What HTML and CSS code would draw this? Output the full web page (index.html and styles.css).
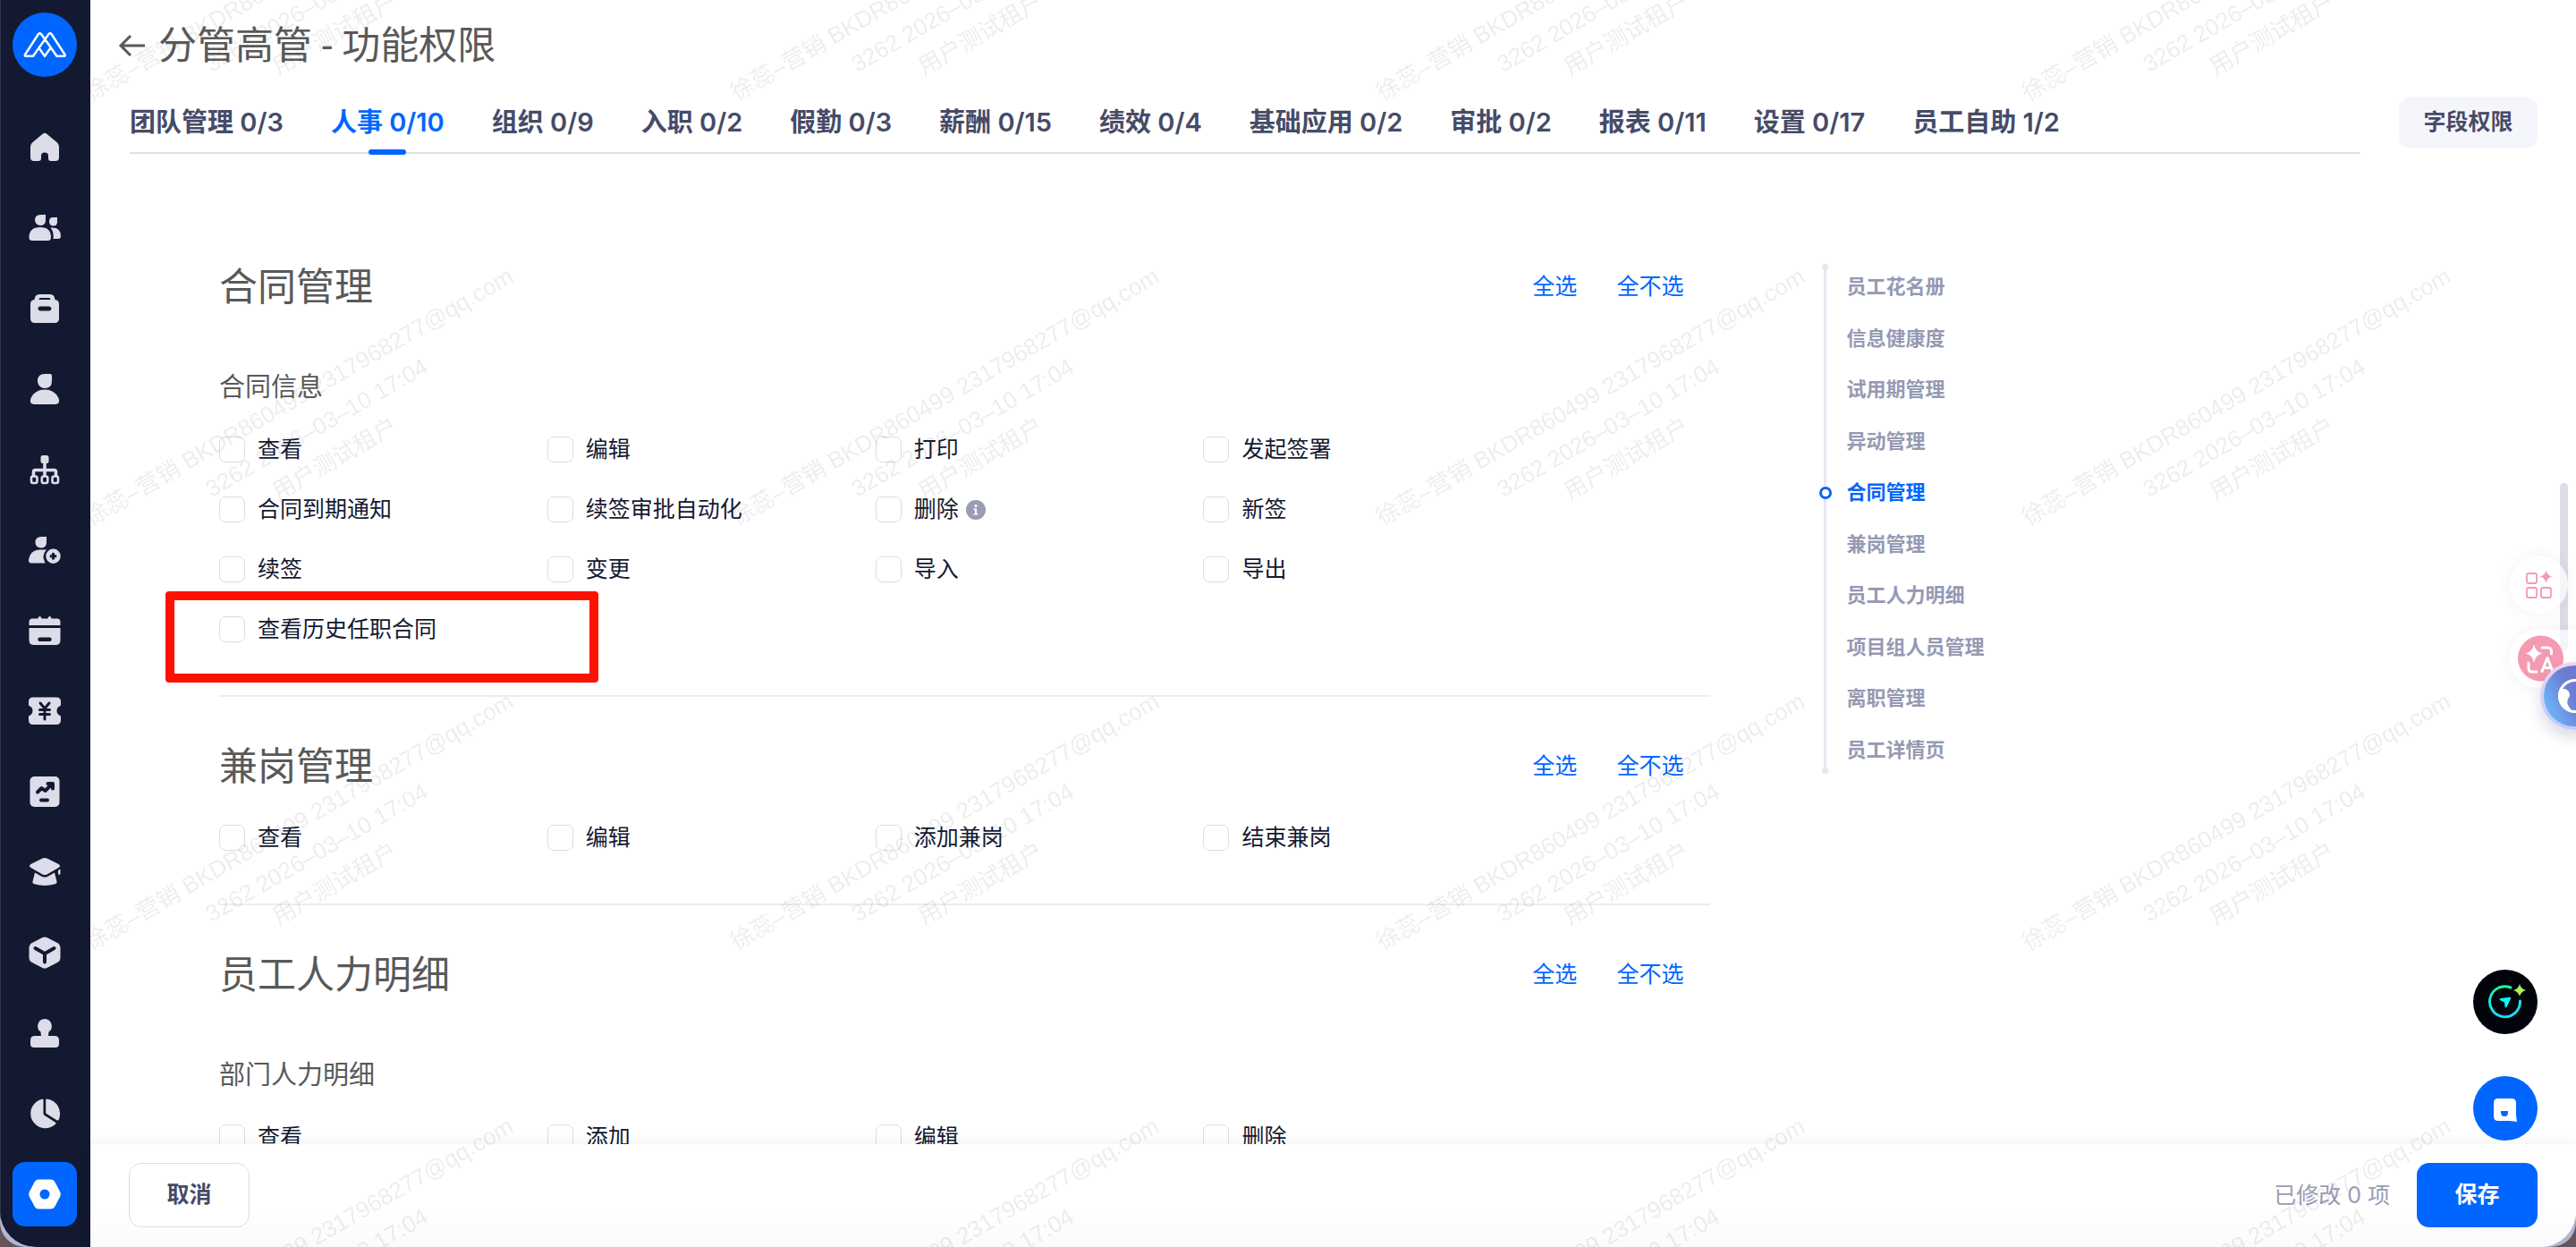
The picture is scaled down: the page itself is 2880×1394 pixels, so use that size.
FILE: index.html
```html
<!DOCTYPE html>
<html lang="zh-CN">
<head>
<meta charset="utf-8">
<title>分管高管 - 功能权限</title>
<link rel="stylesheet" href="styles.css">
</head>
<body>
<div class="window">
<div class="app">
  <aside class="sidebar">
    <a class="logo" href="#" aria-label="首页">
      <svg viewBox="0 0 72 72" width="72" height="72" fill="none" stroke="#fff" stroke-width="2.400" stroke-linejoin="round" stroke-linecap="round"><path d="M36 29.500l-4-5.500q-1.500-1.500-3 0L14 47q-.8 1.700 1 1.700h8L40.500 24q1.500-1.500 3 0l15 23q.8 1.700-1 1.700h-8L36 29.500M29.500 39.500l6.500 9.200 6.500-9.200"/></svg>
    </a>
    <nav class="menu">
      <a href="#" aria-label="工作台"><svg viewBox="0 0 36 36"><path d="M16 2.600q2-1.600 4 0l11.500 9.400q2.500 2 2.500 5V29q0 4-4 4h-5q-3 0-3-3v-3q0-3.500-4-3.500T14 27v3q0 3-3 3H6q-4 0-4-4V17q0-3 2.500-5z"/></svg></a>
      <a href="#" aria-label="团队"><svg viewBox="0 0 36 36"><path d="M13.500 3H19v6q0 6-6 6a6 6 0 0 1-6-6q0-6 6.500-6zM13 17q12 0 12 11.500 0 3.500-3.500 3.500H4Q.500 32 .500 28.500.500 17 13 17zM27 6h5v5q0 4.500-4.500 4.500A4.500 4.500 0 0 1 23 11q0-5 4-5zM24.500 17.500Q36 16.500 36 27q0 3-3 3h-5.500q1-7.500-3-12.500z"/></svg></a>
      <a href="#" aria-label="档案"><svg viewBox="0 0 36 36"><path fill-rule="evenodd" d="M12 2h12q5 0 5.500 6Q34 8.500 34 13v16q0 5-5 5H7q-5 0-5-5V13q0-4.500 4.500-5Q7 2 12 2zM13 6q-1.500 0-1.500 2h13Q24.500 6 23 6zM13 15.500a2.500 2.500 0 0 0 0 5h10a2.500 2.500 0 0 0 0-5z"/></svg></a>
      <a href="#" aria-label="员工"><svg viewBox="0 0 36 36"><path d="M18 1h6q2 0 2 2v6q0 8-8 8a8 8 0 0 1-8-8q0-8 8-8zM18 18.500q11 0 15.500 9.500 2.500 7-4 7h-23q-6.500 0-4-7Q7 18.500 18 18.500z"/></svg></a>
      <a href="#" aria-label="组织"><svg viewBox="0 0 36 36"><rect x="13.500" y="2" width="9" height="9" rx="2.500"/><path d="M18 9v16M5.500 25v-4.500q0-2 2-2h21q2 0 2 2V25" fill="none" stroke="#dcdde8" stroke-width="3.600"/><g fill="none" stroke="#dcdde8" stroke-width="2.600"><rect x="3" y="25.500" width="6.500" height="7.500" rx="2"/><rect x="14.800" y="25.500" width="6.500" height="7.500" rx="2"/><rect x="26.500" y="25.500" width="6.500" height="7.500" rx="2"/></g></svg></a>
      <a href="#" aria-label="入职"><svg viewBox="0 0 36 36"><path d="M14 3h6v6.500q0 6-6.500 6A6 6 0 0 1 7.500 9.500Q7.500 3 14 3zM13 17.500h7q-6 6.500-1.500 15H3q-3 0-3-3Q1.500 17.500 13 17.500z"/><path fill-rule="evenodd" d="M27.500 16.500a8.200 8.200 0 1 1 0 16.400 8.200 8.200 0 0 1 0-16.400zM26 21v2.200h-2.200v3H26v2.200h3v-2.200h2.200v-3H29V21z"/></svg></a>
      <a href="#" aria-label="假勤"><svg viewBox="0 0 36 36"><path d="M.500 12V8.500q0-4 4-4H10.500q0-2.500 2-2.500t2 2.500h7q0-2.500 2-2.500t2 2.500h6q4 0 4 4V12z"/><path fill-rule="evenodd" d="M.500 15h35v13.500q0 5.500-5.500 5.500H6q-5.500 0-5.500-5.500zM12.500 25.500a2.200 2.200 0 0 0 0 4.400h11a2.200 2.200 0 0 0 0-4.400z"/></svg></a>
      <a href="#" aria-label="薪酬"><svg viewBox="0 0 36 36"><path d="M5 2.500h26q5 0 5 5v4q-4.500 2-4.500 6t4.500 6v4.500q0 5-5 5H5q-5 0-5-5v-4.500q4.500-2 4.500-6T0 11.500v-4q0-5 5-5z"/><path d="M13 9l5 6 5-6M12.500 16.500h11M12.500 21.500h11M18 15v12" class="cut thin"/></svg></a>
      <a href="#" aria-label="绩效"><svg viewBox="0 0 36 36"><rect x="1.500" y="1" width="33" height="34" rx="5"/><path d="M10 18.500l4.500-4.500 4 3 7-7M21.500 9H27v5.500M14 27.500h7" class="cut"/></svg></a>
      <a href="#" aria-label="培训"><svg viewBox="0 0 36 36"><path d="M15.500 2.500q2.500-1.200 5 0l13 6.500q3 2 0 4L20.500 20.500q-2.500 1.200-5 0L2.500 13q-3-2 0-4zM7 18.500l7.500 4.200q3.500 1.800 7 0L29 18.500l2.500 10q.5 2-2 2.800-11.500 3.400-23 0-2.500-.8-2-2.800zM33 16l2.500-1.500v5q-1 3-2.500 0z"/></svg></a>
      <a href="#" aria-label="应用"><svg viewBox="0 0 36 36"><path d="M15.500 1q2.500-1.200 5 0l12 6.300Q35.500 9 35.500 12v12q0 3-3 4.700L20.500 35q-2.500 1.200-5 0l-12-6.300Q.500 27 .500 24V12q0-3 3-4.700z"/><path d="M7.500 13l10.500 6 10.500-6M18 19v9.500" class="cut"/></svg></a>
      <a href="#" aria-label="审批"><svg viewBox="0 0 36 36"><path d="M18 2a8 8 0 0 1 4.500 14.500L22 21h7q5 0 5 5v4q0 4-4 4H6q-4 0-4-4v-4q0-5 5-5h7l-.5-4.500A8 8 0 0 1 18 2z"/></svg></a>
      <a href="#" aria-label="报表"><svg viewBox="0 0 36 36"><path d="M15.500 1.500q1 0 1 1.500v15q0 1 1 1.700l12.500 8q1 1 0 2A16.500 16.500 0 1 1 15.500 1.500zM20 1.500A16.500 16.500 0 0 1 33.500 25q-.8 1-2 .3L20 18q-.8-.5-.8-1.500V2.500q0-1 .8-1z"/></svg></a>
      <a href="#" aria-label="设置" class="active"><svg viewBox="0 0 36 36"><path fill="#fff" fill-rule="evenodd" d="M11.500 1.500h13q3.500 0 5 3l5.500 10.500q1.500 3 0 6L29.500 31.500q-1.500 3-5 3h-13q-3.500 0-5-3L1 21q-1.500-3 0-6L6.500 4.500q1.500-3 5-3zM18 12.500a5.500 5.500 0 1 0 0 11 5.500 5.500 0 0 0 0-11z"/></svg></a>
    </nav>
  </aside>

  <main class="main">
    <header class="header">
      <a class="back" href="#" aria-label="返回"><svg viewBox="0 0 32 32" width="32" height="32" fill="none" stroke="#595959" stroke-width="3"><path d="M15 5L4 16l11 11M3.500 16H31"/></svg></a>
      <h1>分管高管 - 功能权限</h1>
    </header>

    <div class="tabbar">
      <nav class="tabs">
        <a href="#">团队管理 0/3</a>
        <a href="#" class="current">人事 0/10</a>
        <a href="#">组织 0/9</a>
        <a href="#">入职 0/2</a>
        <a href="#">假勤 0/3</a>
        <a href="#">薪酬 0/15</a>
        <a href="#">绩效 0/4</a>
        <a href="#">基础应用 0/2</a>
        <a href="#">审批 0/2</a>
        <a href="#">报表 0/11</a>
        <a href="#">设置 0/17</a>
        <a href="#">员工自助 1/2</a>
      </nav>
      <button type="button" class="field-btn">字段权限</button>
    </div>

    <div class="content">
      <div class="sections">
        <section>
          <div class="section-head"><h2>合同管理</h2><a href="#">全选</a><a href="#">全不选</a></div>
          <h3>合同信息</h3>
          <div class="options">
            <label><input type="checkbox">查看</label>
            <label><input type="checkbox">编辑</label>
            <label><input type="checkbox">打印</label>
            <label><input type="checkbox">发起签署</label>
            <label><input type="checkbox">合同到期通知</label>
            <label><input type="checkbox">续签审批自动化</label>
            <label><input type="checkbox">删除<svg class="info" viewBox="0 0 22 22" width="22" height="22"><circle cx="11" cy="11" r="11" fill="#999cb5"/><circle cx="11" cy="6.500" r="1.600" fill="#fff"/><path d="M8.500 9.500H12V15h1.500v1.500h-5V15H10v-4H8.500z" fill="#fff"/></svg></label>
            <label><input type="checkbox">新签</label>
            <label><input type="checkbox">续签</label>
            <label><input type="checkbox">变更</label>
            <label><input type="checkbox">导入</label>
            <label><input type="checkbox">导出</label>
            <label class="marked"><input type="checkbox">查看历史任职合同</label>
          </div>
        </section>
        <section>
          <div class="section-head"><h2>兼岗管理</h2><a href="#">全选</a><a href="#">全不选</a></div>
          <div class="options">
            <label><input type="checkbox">查看</label>
            <label><input type="checkbox">编辑</label>
            <label><input type="checkbox">添加兼岗</label>
            <label><input type="checkbox">结束兼岗</label>
          </div>
        </section>
        <section>
          <div class="section-head"><h2>员工人力明细</h2><a href="#">全选</a><a href="#">全不选</a></div>
          <h3>部门人力明细</h3>
          <div class="options">
            <label><input type="checkbox">查看</label>
            <label><input type="checkbox">添加</label>
            <label><input type="checkbox">编辑</label>
            <label><input type="checkbox">删除</label>
          </div>
        </section>
      </div>
      <nav class="anchors">
        <a href="#">员工花名册</a>
        <a href="#">信息健康度</a>
        <a href="#">试用期管理</a>
        <a href="#">异动管理</a>
        <a href="#" class="current">合同管理</a>
        <a href="#">兼岗管理</a>
        <a href="#">员工人力明细</a>
        <a href="#">项目组人员管理</a>
        <a href="#">离职管理</a>
        <a href="#">员工详情页</a>
      </nav>
    </div>

    <footer class="footer">
      <button type="button" class="cancel">取消</button>
      <span class="changed">已修改 0 项</span>
      <button type="button" class="save">保存</button>
    </footer>
  </main>
</div>

<div class="scroll-thumb"></div>

<div class="plugins">
  <button type="button" class="plugin" aria-label="组件">
    <svg viewBox="0 0 65 65" width="65" height="65" fill="none" stroke="#f49ab1" stroke-width="1.800"><rect x="19" y="20" width="11" height="11" rx="2"/><rect x="19" y="36" width="11" height="11" rx="2"/><rect x="35" y="36" width="11" height="11" rx="2"/><path stroke="none" fill="#f49ab1" d="M40.500 16.500q1 6 7 7-6 1-7 7.500-1-6.500-7-7.500 6-1 7-7z"/></svg>
  </button>
  <button type="button" class="plugin translate" aria-label="翻译">
    <svg viewBox="0 0 65 65" width="65" height="65" fill="none" stroke="#fff" stroke-width="3" stroke-linecap="round" stroke-linejoin="round"><circle cx="34.500" cy="32" r="25.500" fill="#f49ab1" stroke="none"/><path d="M36 20h6q4.500 0 4.500 4.500V27M21 37v6q0 4 4 4h5M36 46.500l6-15 6 15M38 42.500h8"/><path stroke="none" fill="#fff" d="M27 16q1.500 9 9.500 10.500Q28.500 28 27 37q-1.500-9-9.500-10.500Q25.500 25 27 16z"/></svg>
  </button>
</div>
<button type="button" class="orb" aria-label="助手">
  <svg viewBox="0 0 76 76" width="76" height="76"><defs><linearGradient id="orbFill" x1="0" y1=".7" x2="1" y2=".2"><stop offset="0" stop-color="#6bb8fa"/><stop offset=".45" stop-color="#6c7fd4"/><stop offset="1" stop-color="#6a6bc0"/></linearGradient><linearGradient id="orbRim" x1="0" y1="0" x2="0" y2="1"><stop offset="0" stop-color="#f0d2ec"/><stop offset=".5" stop-color="#dccdfb"/><stop offset="1" stop-color="#b9ccff"/></linearGradient></defs><circle cx="38" cy="38" r="38" fill="url(#orbRim)"/><circle cx="38" cy="38" r="34" fill="url(#orbFill)"/><circle cx="39" cy="38" r="17.500" fill="none" stroke="#fff" stroke-width="3"/><path fill="#fff" d="M20 38q0-8 7-8a7 7 0 0 1 6 8q-4 5-2 10 2 5 8 9-18-3-19-19z"/></svg>
</button>

<div class="assist">
  <button type="button" class="ai" aria-label="智能助手">
    <svg viewBox="0 0 72 72" width="72" height="72"><defs><linearGradient id="ring" x1="0" y1="0" x2="0" y2="1"><stop offset="0" stop-color="#19f5a0"/><stop offset="1" stop-color="#1ad8ff"/></linearGradient></defs><path d="M42 20a17 17 0 1 0 10.500 15" fill="none" stroke="url(#ring)" stroke-width="3" stroke-linecap="round"/><path d="M31 32l10-1.300q1.500 0 1 1.500L37.500 42q-1.500 1-2-1l-.5-4.500-5-2.500q-1.500-1.500 1-2z" fill="#0ff"/><path d="M52 16q1.500 5.500 7 7-5.500 1.500-7 7-1.500-5.500-7-7 5.500-1.500 7-7z" fill="#aaf25a"/></svg>
  </button>
  <button type="button" class="chat" aria-label="客服">
    <svg viewBox="0 0 72 72" width="72" height="72"><path fill="#fff" fill-rule="evenodd" d="M28 25h15q5 0 5 5v14l1 7-8-1H28q-5 0-5-5V30q0-5 5-5zM31 39v1.500q0 4.500 4 4.500t4-4.500V39z"/></svg>
  </button>
</div>

<svg class="watermark" aria-hidden="true">
  <defs>
    <pattern id="mark" x="-9" y="-236" width="722" height="475" patternUnits="userSpaceOnUse">
      <g transform="translate(363 239) rotate(-30)" text-anchor="middle">
        <text y="-31">徐蕊–营销 BKDR860499 2317968277@qq.com</text>
        <text y="9">3262 2026–03–10 17:04</text>
        <text y="49">用户测试租户</text>
      </g>
    </pattern>
  </defs>
  <rect width="100%" height="100%" fill="url(#mark)"/>
</svg>
</div>
</body>
</html>
```
FILE: styles.css
```css
*,
*::before,
*::after {
  box-sizing: border-box;
}

body {
  margin: 0;
  background: #65545c;
  font-family: Roboto, "Noto Sans CJK SC", sans-serif;
  font-size: 25px;
  line-height: 36px;
  color: #141932;
}

a {
  color: inherit;
  text-decoration: none;
}

button {
  border: 0;
  padding: 0;
  font: inherit;
  cursor: pointer;
}

h1, h2, h3 {
  margin: 0;
  font-weight: 400;
  color: #595959;
}

.window {
  position: relative;
  height: 100vh;
  overflow: hidden;
  border-radius: 0 0 28px 28px;
  background: #b3b6d0;
}

.app {
  display: flex;
  height: 100%;
  overflow: hidden;
  border-radius: 0 0 40px 40px;
  background: #fff;
}

/* Sidebar */
.sidebar {
  flex: 0 0 101px;
  display: flex;
  flex-direction: column;
  align-items: center;
  padding: 14px 1px 0 0;
  background: #141932;
  box-shadow: inset 1px 0 #2f3553;
}

.logo {
  height: 72px;
  border-radius: 50%;
  background: #0066ff;
}

.menu {
  display: flex;
  flex-direction: column;
  gap: 18px;
  padding-top: 43px;
}

.menu a {
  display: grid;
  place-items: center;
  width: 72px;
  height: 72px;
  border-radius: 14px;
}

.menu .active {
  background: #0066ff;
}

.menu svg {
  width: 36px;
  height: 36px;
  fill: #dcdde8;
}

.menu .cut {
  fill: none;
  stroke: #141932;
  stroke-width: 4;
  stroke-linecap: round;
  stroke-linejoin: round;
}

.menu .thin {
  stroke-width: 3;
}

/* Page head */
.main {
  flex: 1;
  min-width: 0;
  display: flex;
  flex-direction: column;
}

.header {
  display: flex;
  align-items: center;
  gap: 14px;
  padding: 21px 30px 0;
}

.back {
  display: flex;
}

h1 {
  font-size: 43px;
  line-height: 60px;
}

.tabbar {
  display: flex;
  align-items: center;
  gap: 43px;
  padding: 21px 43px 0 44px;
}

.tabs {
  flex: 1;
  display: flex;
  gap: 53px;
  border-bottom: 2px solid #e0e0e3;
  font-family: Inter, "Noto Sans CJK SC", sans-serif;
}

.tabs a {
  position: relative;
  padding: 14px 0 12px;
  font-size: 29px;
  line-height: 42px;
  font-weight: 600;
  color: #464b68;
  white-space: nowrap;
}

.tabs .current {
  color: #0066ff;
}

.tabs .current::after {
  content: "";
  position: absolute;
  left: calc(50% - 21px);
  bottom: -3px;
  width: 42px;
  height: 6px;
  border-radius: 3px;
  background: #0066ff;
}

.field-btn {
  width: 155px;
  height: 58px;
  border-radius: 14px;
  background: #f5f6fc;
  color: #464b68;
  font-weight: 600;
}

/* Permission sections */
.content {
  flex: 1;
  min-height: 0;
  display: flex;
  gap: 127px;
  overflow: hidden;
  padding-top: 71px;
}

.sections {
  flex: 0 0 calc(60% + 144px);
  padding-left: 144px;
}

section {
  padding: 48px 0 59px;
  border-bottom: 2px solid #ececf1;
}

.section-head {
  display: flex;
  align-items: center;
  gap: 44px;
  padding-right: 30px;
}

h2 {
  flex: 1;
  font-size: 43px;
  line-height: 60px;
}

.section-head a {
  color: #0066ff;
}

h3 {
  margin-top: 62px;
  font-size: 29px;
  line-height: 40px;
}

.options {
  display: grid;
  grid-template-columns: repeat(4, 22%);
  row-gap: 38px;
  margin-top: 35px;
}

.options label {
  display: flex;
  align-items: center;
  gap: 14px;
  height: 29px;
  line-height: 29px;
  white-space: nowrap;
}

.options input {
  appearance: none;
  width: 29px;
  height: 29px;
  margin: 0;
  border: 1px solid #dcdce8;
  border-radius: 7px;
  background: #fff;
}

.info {
  margin-left: -6px;
}

.marked {
  position: relative;
}

.marked::after {
  content: "";
  position: absolute;
  left: -60px;
  top: -28px;
  width: 484px;
  height: 102px;
  border: 10px solid #ff1100;
  border-radius: 4px;
}

/* Anchor list */
.anchors {
  position: relative;
  display: flex;
  flex-direction: column;
  justify-content: space-between;
  height: 570px;
  margin-top: 52px;
  padding: 9px 0 9px 22px;
  border-left: 3px solid #e7e7f1;
  font-size: 22px;
  line-height: 34px;
  font-weight: 600;
  color: #9599b3;
}

.anchors::before,
.anchors::after {
  content: "";
  position: absolute;
  left: -5px;
  width: 7px;
  height: 7px;
  border-radius: 50%;
  background: #e7e7f1;
}

.anchors::before {
  top: 0;
}

.anchors::after {
  bottom: 0;
}

.anchors a {
  position: relative;
}

.anchors .current {
  color: #0066ff;
}

.anchors .current::before {
  content: "";
  position: absolute;
  left: -30px;
  top: 10px;
  width: 14px;
  height: 14px;
  border: 3px solid #0066ff;
  border-radius: 50%;
  background: #fff;
}

/* Footer */
.footer {
  position: relative;
  display: flex;
  align-items: center;
  padding: 21px 43px 22px;
  background: linear-gradient(#fff 60%, #fbfbfb);
  box-shadow: 0 0 16px rgba(0, 0, 0, 0.07);
}

.cancel,
.save {
  width: 135px;
  height: 72px;
  border-radius: 14px;
  font-weight: 600;
}

.cancel {
  border: 1px solid #dcdce8;
  background: #fff;
  color: #464b68;
}

.save {
  background: #0066ff;
  color: #fff;
}

.changed {
  margin: 0 30px 0 auto;
  font-family: Inter, "Noto Sans CJK SC", sans-serif;
  color: #999cb5;
}

/* Floating tools */
.scroll-thumb {
  position: absolute;
  top: 540px;
  right: 9px;
  width: 9px;
  height: 188px;
  border-radius: 5px;
  background: #dcdce8;
}

.plugins {
  position: absolute;
  top: 621px;
  right: 0;
  display: flex;
  flex-direction: column;
  gap: 18px;
}

.plugin {
  width: 65px;
  height: 65px;
  margin-right: 9px;
  border-radius: 50%;
  background: rgba(255, 255, 255, 0.7);
  box-shadow: 0 0 20px rgba(0, 0, 0, 0.06);
}

.plugin.translate {
  width: 74px;
  margin-right: 0;
  border-radius: 33px 0 0 33px;
  text-align: left;
}

.plugin svg,
.orb svg,
.assist svg,
.logo svg {
  display: block;
}

.orb {
  position: absolute;
  top: 740px;
  right: -36px;
  width: 76px;
  height: 76px;
  border-radius: 50%;
  background: none;
  box-shadow: 0 8px 16px rgba(60, 60, 120, 0.2);
}

.assist {
  position: absolute;
  right: 43px;
  bottom: 119px;
  display: flex;
  flex-direction: column;
  gap: 47px;
}

.assist button {
  width: 72px;
  height: 72px;
  border-radius: 50%;
}

.ai {
  background: #02040c;
}

.chat {
  background: #0066ff;
}

.watermark {
  position: absolute;
  inset: 0;
  width: 100%;
  height: 100%;
  pointer-events: none;
  font-family: "Liberation Sans", "Noto Sans CJK SC", sans-serif;
  font-size: 26px;
  fill: rgba(20, 20, 30, 0.08);
}
```
